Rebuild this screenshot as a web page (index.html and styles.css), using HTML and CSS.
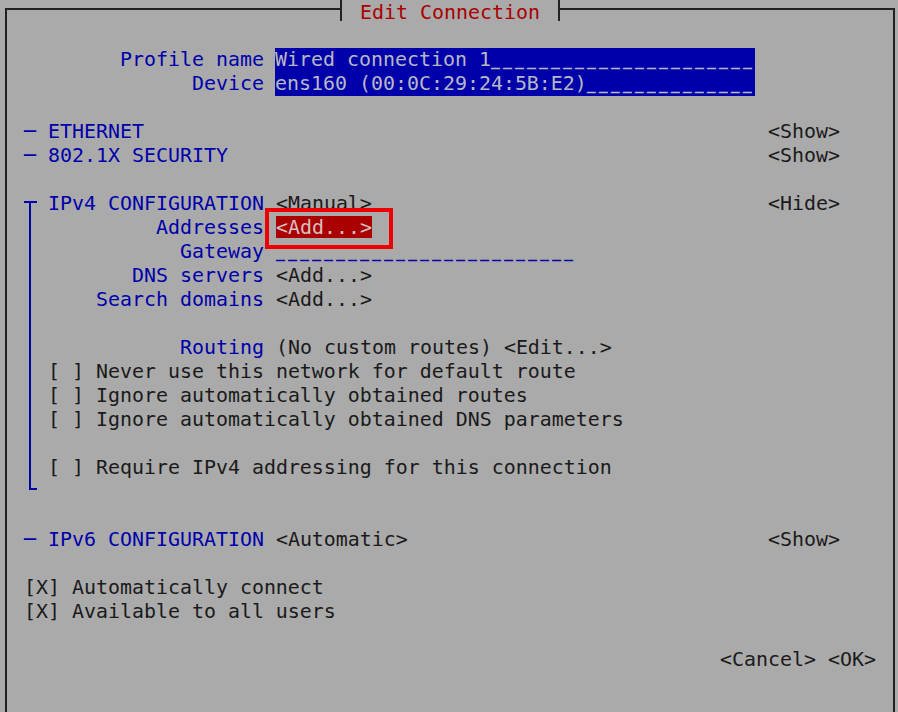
FILE: index.html
```html
<!DOCTYPE html>
<html lang="en">
<head>
    <meta charset="UTF-8">
    <meta name="viewport" content="width=device-width, initial-scale=1.0">
    <title>Edit Connection</title>
    <link rel="stylesheet" href="styles.css">
</head>
<body>
    <div class="frame">
        <div class="title-row">
            <div class="title">Edit Connection</div>
        </div>

        <div class="body">
            <div class="row"></div>
            <div class="row">
                <span class="label">Profile name</span>
                <span class="field">Wired connection 1<span class="blank">______________________</span></span>
            </div>
            <div class="row">
                <span class="label">Device</span>
                <span class="field">ens160 (00:0C:29:24:5B:E2)<span class="blank">______________</span></span>
            </div>
            <div class="row"></div>

            <div class="row">
                <span class="blue">─ ETHERNET</span>
                <span class="action">&lt;Show&gt;</span>
            </div>
            <div class="row">
                <span class="blue">─ 802.1X SECURITY</span>
                <span class="action">&lt;Show&gt;</span>
            </div>
            <div class="row"></div>

            <div class="group">
                <div class="bracket"></div>
                <div class="group-rows">
                    <div class="row">
                        <span class="blue">IPv4 CONFIGURATION</span>
                        <span class="value">&lt;Manual&gt;</span>
                        <span class="action">&lt;Hide&gt;</span>
                    </div>
                    <div class="row">
                        <span class="label short">Addresses</span>
                        <span class="value"><span class="focused">&lt;Add...&gt;</span></span>
                    </div>
                    <div class="row">
                        <span class="label short">Gateway</span>
                        <span class="value"><span class="blank blue">_________________________</span></span>
                    </div>
                    <div class="row">
                        <span class="label short">DNS servers</span>
                        <span class="value">&lt;Add...&gt;</span>
                    </div>
                    <div class="row">
                        <span class="label short">Search domains</span>
                        <span class="value">&lt;Add...&gt;</span>
                    </div>
                    <div class="row"></div>
                    <div class="row">
                        <span class="label short">Routing</span>
                        <span class="value">(No custom routes) &lt;Edit...&gt;</span>
                    </div>
                    <div class="row">[ ] Never use this network for default route</div>
                    <div class="row">[ ] Ignore automatically obtained routes</div>
                    <div class="row">[ ] Ignore automatically obtained DNS parameters</div>
                    <div class="row"></div>
                    <div class="row">[ ] Require IPv4 addressing for this connection</div>
                    <div class="row"></div>
                </div>
            </div>

            <div class="row"></div>
            <div class="row">
                <span class="blue">─ IPv6 CONFIGURATION</span>
                <span class="value">&lt;Automatic&gt;</span>
                <span class="action">&lt;Show&gt;</span>
            </div>
            <div class="row"></div>
            <div class="row">[X] Automatically connect</div>
            <div class="row">[X] Available to all users</div>
            <div class="row"></div>
            <div class="row buttons">&lt;Cancel&gt; &lt;OK&gt;</div>
            <div class="row"></div>
        </div>
    </div>
</body>
</html>
```

FILE: styles.css
```css
body {
    margin: 0;
    background-color: #aaaaaa;
    font-family: 'DejaVu Sans Mono', monospace;
    font-size: 19.93px;
    line-height: 24px;
    color: #1a1a1a;
    height: 712px;
    overflow: hidden;
}

.frame {
    margin: 8px 3px 0 5px;
    height: 720px;
    border: 2px solid #222;
    border-bottom: none;
}

.title-row {
    display: flex;
    justify-content: center;
    margin-top: -10px;
    height: 24px;
}

.title {
    height: 21px;
    padding: 0 18px;
    border-left: 2px solid #222;
    border-right: 2px solid #222;
    background-color: #aaaaaa;
    color: #aa0000;
    line-height: 25px;
    white-space: pre;
}

.body {
    padding: 0 53px 0 17px;
}

.row {
    display: flex;
    height: 24px;
    white-space: pre;
}

.label {
    width: 240px;
    text-align: right;
    color: #0000aa;
}

.label.short {
    width: 216px;
}

.value {
    margin-left: 12px;
}

.field {
    display: inline-block;
    margin-left: 11px;
    height: 24px;
    background-color: #0000aa;
    color: #b8b8c4;
}

/* underscores of an empty entry, drawn as separate dashes */
.blank {
    font-size: 15px;
    font-weight: bold;
    letter-spacing: 2.97px;
}

.blue {
    color: #0000aa;
}

.action {
    margin-left: auto;
}

.focused {
    position: relative;
    display: inline-block;
    height: 22px;
    margin-top: -1px;
    line-height: 24px;
    background-color: #aa0000;
    color: #d6c0c0;
}

/* red annotation box around the focused button */
.focused::after {
    content: '';
    position: absolute;
    left: -11px;
    top: -8px;
    width: 120px;
    height: 33px;
    border: 4px solid #ee0000;
}

.group {
    display: flex;
}

.bracket {
    display: flex;
    flex-direction: column;
    width: 13px;
    margin: 9px 11px 14px 0;
    border-top: 2px solid #0000aa;
}

.bracket::after {
    content: '';
    flex: 1;
    margin-left: 5px;
    border-left: 2px solid #0000aa;
    border-bottom: 2px solid #0000aa;
}

.group-rows {
    flex: 1;
}

.buttons {
    justify-content: flex-end;
    margin-right: -36px;
}
```
